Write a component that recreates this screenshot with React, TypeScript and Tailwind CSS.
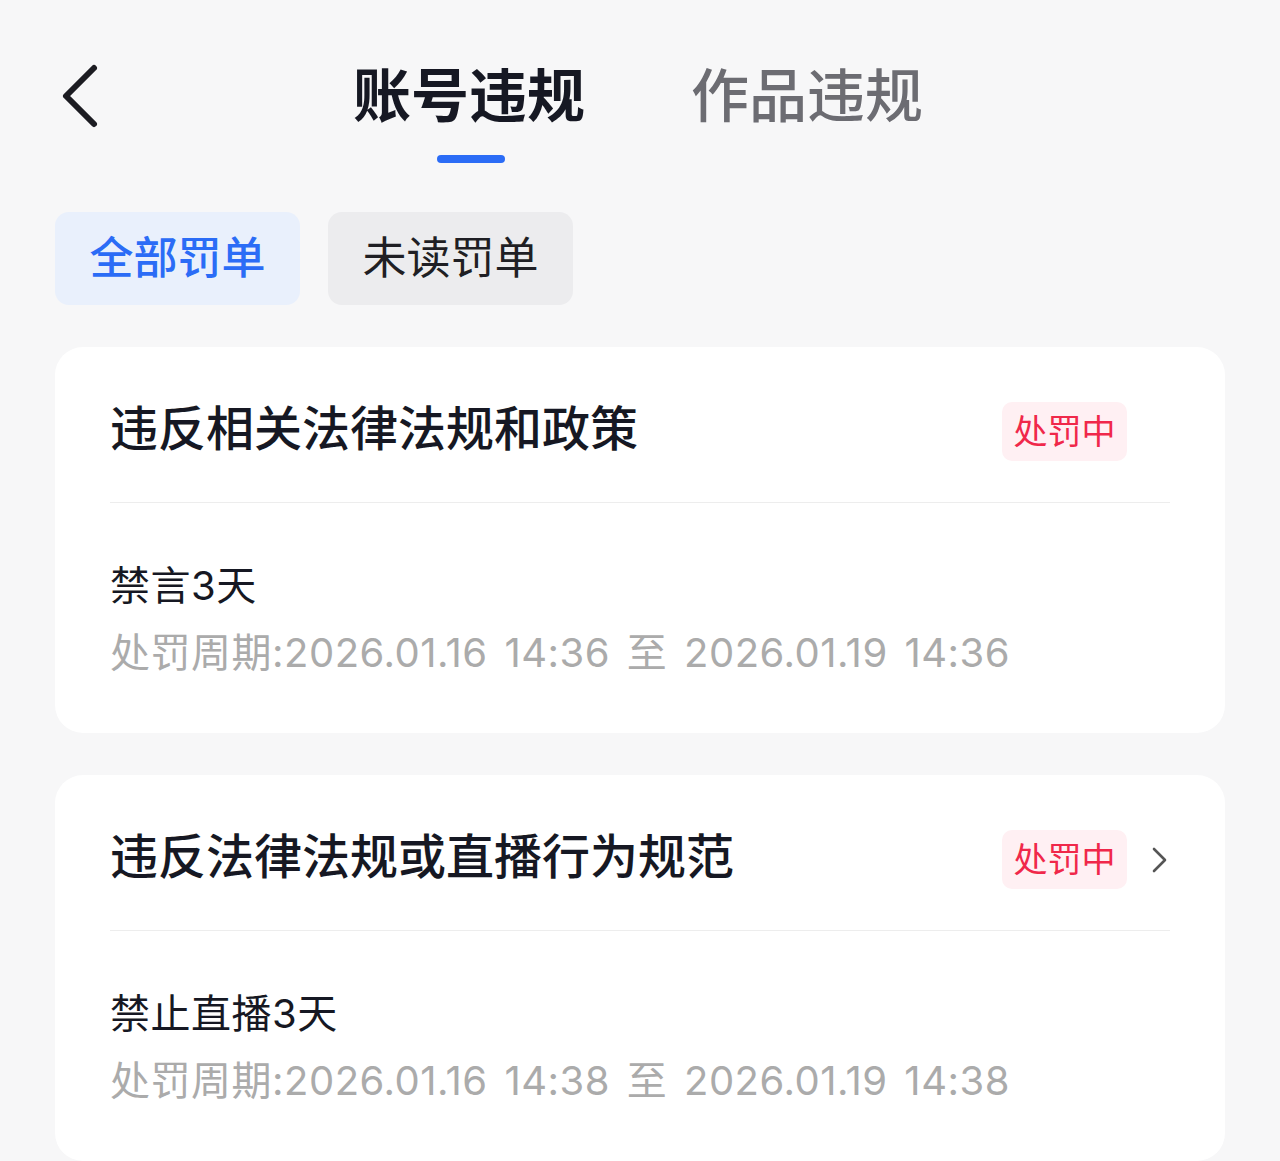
import React from "react";

const font = { fontFamily: 'Inter, "Noto Sans CJK SC", "Noto Sans", sans-serif' };

type Penalty = {
  title: string;
  action: string;
  period: string;
  arrow?: boolean;
};

const penalties: Penalty[] = [
  {
    title: "违反相关法律法规和政策",
    action: "禁言3天",
    period: "处罚周期:2026.01.16 14:36 至 2026.01.19 14:36",
  },
  {
    title: "违反法律法规或直播行为规范",
    action: "禁止直播3天",
    period: "处罚周期:2026.01.16 14:38 至 2026.01.19 14:38",
    arrow: true,
  },
];

const PenaltyCard: React.FC<{ item: Penalty }> = ({ item }) => (
  <div className="bg-white rounded-[28px] px-[55px] pt-[55px] pb-[47px]">
    <div className="flex items-center h-[59px]">
      <h3 className="flex-1 text-[48px] font-medium leading-none pb-[6px] text-[#161823]">
        {item.title}
      </h3>
      <span className="h-[59px] w-[125px] flex items-center justify-center rounded-[10px] bg-[#fff0f3] text-[#f0284a] text-[34px] leading-none">
        处罚中
      </span>
      {item.arrow ? (
        <svg width="43" height="30" viewBox="0 0 43 30" className="shrink-0">
          <path
            d="M27 4 L38 15 L27 26"
            fill="none"
            stroke="#555"
            strokeWidth="2.6"
            strokeLinecap="round"
            strokeLinejoin="round"
          />
        </svg>
      ) : (
        <div className="w-[43px]" />
      )}
    </div>
    <div className="h-px bg-[#ededed] mt-[41px]" />
    <div className="mt-[49px]">
      <p className="text-[40px] leading-[67px] text-[#161823] tracking-[0.5px]">{item.action}</p>
      <p className="text-[40px] leading-[67px] text-[#ababab] tracking-[0.5px] [word-spacing:5px]">
        {item.period}
      </p>
    </div>
  </div>
);

export default function App() {
  return (
    <div className="w-[1280px] h-[1161px] overflow-hidden bg-[#f7f7f8]" style={font}>
      <div className="relative h-[212px]">
        <svg
          width="48"
          height="72"
          viewBox="0 0 48 72"
          className="absolute left-[56px] top-[60px]"
        >
          <path
            d="M38 8 L10 36 L38 64"
            fill="none"
            stroke="#1c1c22"
            strokeWidth="6"
            strokeLinecap="round"
            strokeLinejoin="round"
          />
        </svg>
        <div className="flex justify-center gap-[106px] pt-[60px] pr-[4px]">
          <div className="flex flex-col items-center">
            <span className="text-[58px] font-bold leading-[72px] text-[#161823]">
              账号违规
            </span>
            <span className="mt-[23px] ml-[4px] block w-[68px] h-[8px] rounded-full bg-[#2b6cf6]" />
          </div>
          <div className="flex flex-col items-center">
            <span className="text-[58px] font-medium leading-[72px] text-[#6c6c72]">
              作品违规
            </span>
          </div>
        </div>
      </div>

      <div className="flex gap-[28px] px-[55px]">
        <button className="w-[245px] h-[93px] pb-[1px] rounded-[14px] bg-[#e9f0fc] text-[#2b6cf6] text-[44px] font-medium leading-none">
          全部罚单
        </button>
        <button className="w-[245px] h-[93px] pb-[1px] rounded-[14px] bg-[#ececee] text-[#1f1f24] text-[44px] leading-none">
          未读罚单
        </button>
      </div>

      <div className="flex flex-col gap-[42px] px-[55px] mt-[42px]">
        {penalties.map((p) => (
          <PenaltyCard key={p.title} item={p} />
        ))}
      </div>
    </div>
  );
}
